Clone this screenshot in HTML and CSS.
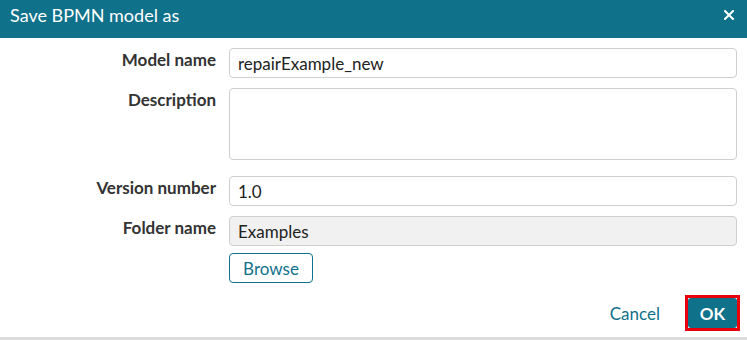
FILE: index.html
```html
<!DOCTYPE html>
<html lang="en">
<head>
  <meta charset="UTF-8">
  <title>Save BPMN model as</title>
  <link rel="stylesheet" href="styles.css">
</head>
<body>
  <div class="dialog">
    <div class="dialog-header">
      <span class="dialog-title">Save BPMN model as</span>
      <button class="close-button" aria-label="Close">
        <svg width="10" height="10" viewBox="0 0 10 10">
          <path d="M1 1 L9 9 M9 1 L1 9" stroke="#fff" stroke-width="2" stroke-linecap="square"/>
        </svg>
      </button>
    </div>
    <form class="dialog-body">
      <div class="form-row">
        <label for="modelName">Model name</label>
        <input type="text" id="modelName" value="repairExample_new">
      </div>
      <div class="form-row row-description">
        <label for="description">Description</label>
        <textarea id="description"></textarea>
      </div>
      <div class="form-row">
        <label for="version">Version number</label>
        <input type="text" id="version" value="1.0">
      </div>
      <div class="form-row">
        <label for="folder">Folder name</label>
        <input type="text" id="folder" value="Examples" readonly class="readonly">
      </div>
      <div class="form-row row-browse">
        <span></span>
        <div><button type="button" class="browse-button">Browse</button></div>
      </div>
    </form>
    <div class="dialog-footer">
      <button type="button" class="cancel-button">Cancel</button>
      <span class="focus-ring"><button type="button" class="ok-button">OK</button></span>
    </div>
  </div>
</body>
</html>
```

FILE: styles.css
```css
body {
  margin: 0;
  padding: 0;
  font-family: 'Lato', 'Liberation Sans', sans-serif;
  background: #ffffff;
  color: #333;
}

.dialog {
  height: 337px;
  border-bottom: 3px solid #dcdcdc;
  display: flex;
  flex-direction: column;
}

.dialog-header {
  height: 38px;
  background-color: #10718b;
  display: flex;
  align-items: center;
  justify-content: space-between;
  padding: 0 13px 0 10px;
  box-sizing: border-box;
}

.dialog-title {
  color: #ffffff;
  font-size: 18px;
  margin-top: -9px;
}

.close-button {
  background: none;
  border: none;
  padding: 0;
  margin-top: -8px;
  width: 10px;
  height: 10px;
  display: flex;
  cursor: pointer;
}

.dialog-body {
  padding: 10px 10px 0 0;
  margin: 0;
  display: flex;
  flex-direction: column;
}

.form-row {
  display: grid;
  grid-template-columns: 216px 1fr;
  column-gap: 13px;
  margin-bottom: 10px;
}

.form-row label {
  text-align: right;
  font-weight: 700;
  font-size: 17px;
  padding-top: 1px;
  color: #333;
}

.form-row input,
.form-row textarea {
  font-family: inherit;
  font-size: 17px;
  color: #222;
  border: 1px solid #cfcfcf;
  border-radius: 4px;
  height: 30px;
  padding: 0 8px;
  box-sizing: border-box;
  outline: none;
}

.form-row textarea {
  height: 72px;
  resize: none;
  display: block;
}

.row-description {
  margin-bottom: 16px;
}

.form-row input.readonly {
  background-color: #f1f1f1;
}

.row-browse {
  margin-top: -3px;
}

.browse-button {
  font-family: inherit;
  font-size: 17px;
  color: #10718b;
  background: #fff;
  border: 1px solid #10718b;
  border-radius: 4px;
  height: 30px;
  width: 84px;
  cursor: pointer;
}

.dialog-footer {
  margin-top: auto;
  display: flex;
  justify-content: flex-end;
  align-items: center;
  padding: 0 7px 6px 0;
  gap: 25px;
}

.cancel-button {
  font-family: inherit;
  font-size: 17px;
  color: #10718b;
  background: none;
  border: none;
  padding: 0;
  cursor: pointer;
}

.focus-ring {
  display: flex;
  border: 3px solid #e8000b;
}

.ok-button {
  font-family: inherit;
  font-size: 17px;
  font-weight: 700;
  color: #fff;
  background-color: #10718b;
  border: none;
  border-radius: 3px;
  width: 49px;
  height: 30px;
  cursor: pointer;
}
```
